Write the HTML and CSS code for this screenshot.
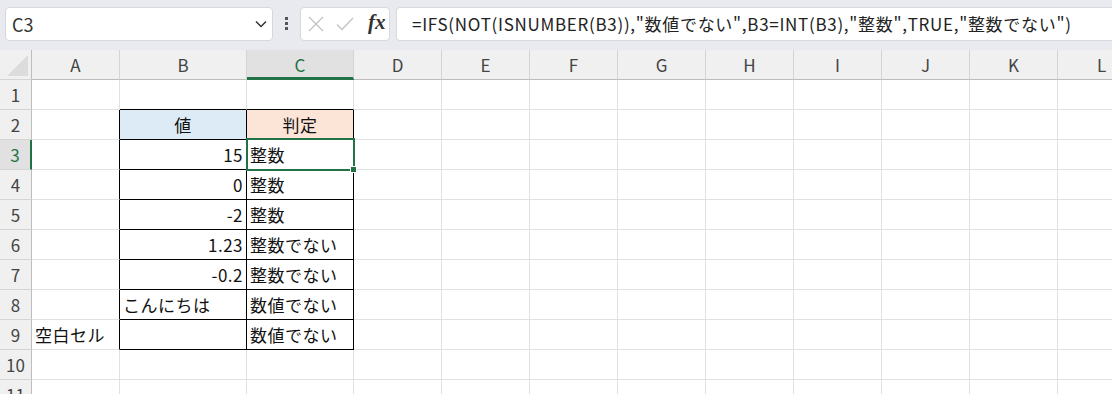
FILE: index.html
```html
<!DOCTYPE html>
<html lang="ja">
<head>
  <meta charset="UTF-8">
  <meta name="viewport" content="width=device-width, initial-scale=1.0">
  <title>IFS 整数判定</title>
  <link rel="stylesheet" href="styles.css">
</head>
<body>
  <div class="formula-bar">
    <div class="name-box">
      <span>C3</span>
      <svg class="chevron" width="12" height="8" viewBox="0 0 12 8"><path d="M1 1.5 L6 6.5 L11 1.5" fill="none" stroke="#333" stroke-width="1.5"/></svg>
    </div>
    <div class="dots"><i></i><i></i><i></i></div>
    <div class="fx-box">
      <svg width="16" height="16" viewBox="0 0 16 16"><path d="M1 1 L15 15 M15 1 L1 15" stroke="#c4c4c4" stroke-width="1.4"/></svg>
      <svg width="18" height="14" viewBox="0 0 18 14"><path d="M1 7.5 L6 12.5 L17 1" fill="none" stroke="#c4c4c4" stroke-width="1.4"/></svg>
      <span class="fx">fx</span>
    </div>
    <div class="formula">=IFS(NOT(ISNUMBER(B3)),"数値でない",B3=INT(B3),"整数",TRUE,"整数でない")</div>
  </div>

  <table class="sheet">
    <colgroup>
      <col class="w-row">
      <col class="w-a">
      <col class="w-b">
      <col class="w-c">
      <col><col><col><col><col><col><col><col><col>
    </colgroup>
    <tr class="col-heads">
      <th class="corner"><div class="tri"></div></th>
      <th>A</th><th>B</th><th class="active">C</th><th>D</th><th>E</th><th>F</th><th>G</th><th>H</th><th>I</th><th>J</th><th>K</th><th>L</th>
    </tr>
    <tr>
      <th>1</th><td></td><td class="top"></td><td class="top"></td><td></td><td></td><td></td><td></td><td></td><td></td><td></td><td></td><td></td>
    </tr>
    <tr>
      <th>2</th><td class="left"></td><td class="box head-b">値</td><td class="box head-c">判定</td><td></td><td></td><td></td><td></td><td></td><td></td><td></td><td></td><td></td>
    </tr>
    <tr>
      <th class="active">3</th><td class="left"></td><td class="box num">15</td><td class="box selected">整数<div class="sel"><div class="handle"></div></div></td><td></td><td></td><td></td><td></td><td></td><td></td><td></td><td></td><td></td>
    </tr>
    <tr>
      <th>4</th><td class="left"></td><td class="box num">0</td><td class="box">整数</td><td></td><td></td><td></td><td></td><td></td><td></td><td></td><td></td><td></td>
    </tr>
    <tr>
      <th>5</th><td class="left"></td><td class="box num">-2</td><td class="box">整数</td><td></td><td></td><td></td><td></td><td></td><td></td><td></td><td></td><td></td>
    </tr>
    <tr>
      <th>6</th><td class="left"></td><td class="box num">1.23</td><td class="box">整数でない</td><td></td><td></td><td></td><td></td><td></td><td></td><td></td><td></td><td></td>
    </tr>
    <tr>
      <th>7</th><td class="left"></td><td class="box num">-0.2</td><td class="box">整数でない</td><td></td><td></td><td></td><td></td><td></td><td></td><td></td><td></td><td></td>
    </tr>
    <tr>
      <th>8</th><td class="left"></td><td class="box">こんにちは</td><td class="box">数値でない</td><td></td><td></td><td></td><td></td><td></td><td></td><td></td><td></td><td></td>
    </tr>
    <tr>
      <th>9</th><td class="left">空白セル</td><td class="box"></td><td class="box">数値でない</td><td></td><td></td><td></td><td></td><td></td><td></td><td></td><td></td><td></td>
    </tr>
    <tr>
      <th>10</th><td></td><td></td><td></td><td></td><td></td><td></td><td></td><td></td><td></td><td></td><td></td><td></td>
    </tr>
    <tr>
      <th>11</th><td></td><td></td><td></td><td></td><td></td><td></td><td></td><td></td><td></td><td></td><td></td><td></td>
    </tr>
  </table>
</body>
</html>
```

FILE: styles.css
```css
body {
  margin: 0;
  width: 1112px;
  height: 394px;
  overflow: hidden;
  background-color: #fff;
  font-family: "Noto Sans CJK JP", "Noto Sans", sans-serif;
  color: #111;
}
.formula-bar {
  display: flex;
  align-items: flex-start;
  height: 50px;
  padding: 7px 0 0 5px;
  box-sizing: border-box;
  background-color: #e8eaef;
}
.name-box {
  display: flex;
  align-items: center;
  justify-content: space-between;
  width: 268px;
  height: 34px;
  padding: 0 5px 0 6px;
  box-sizing: border-box;
  background-color: #fff;
  border: 1px solid #d6d8dd;
  border-radius: 4px;
  font-size: 18px;
  color: #333;
}
.name-box span {
  margin-top: -1px;
}
.dots {
  display: flex;
  flex-direction: column;
  gap: 2px;
  width: 27px;
  align-items: center;
  padding-top: 10px;
}
.dots i {
  width: 3px;
  height: 3px;
  background-color: #555;
}
.fx-box {
  display: flex;
  align-items: center;
  width: 90px;
  height: 34px;
  padding-left: 7px;
  box-sizing: border-box;
  background-color: #fff;
  border: 1px solid #d6d8dd;
  border-radius: 4px;
}
.fx-box svg {
  margin-right: 12px;
}
.fx-box svg + svg {
  margin-right: 14px;
}
.fx {
  font-family: "Liberation Serif", serif;
  font-style: italic;
  font-weight: bold;
  font-size: 21px;
  color: #333;
  margin-top: -3px;
}
.formula {
  flex: 1;
  height: 34px;
  margin-left: 6px;
  padding-left: 15px;
  box-sizing: border-box;
  background-color: #fff;
  border: 1px solid #d6d8dd;
  border-right: none;
  border-radius: 4px 0 0 4px;
  font-size: 17px;
  line-height: 32px;
  color: #222;
  white-space: nowrap;
  letter-spacing: 0.7px;
}
.sheet {
  table-layout: fixed;
  width: 1145px;
  border-collapse: separate;
  border-spacing: 0;
}
.sheet col {
  width: 88px;
}
.sheet col.w-row {
  width: 32px;
}
.sheet col.w-b {
  width: 127px;
}
.sheet col.w-c {
  width: 107px;
}
.sheet th,
.sheet td {
  box-sizing: border-box;
  height: 30px;
  padding: 0 3px;
  border-right: 1px solid #e1e1e1;
  border-bottom: 1px solid #e1e1e1;
  font-size: 17px;
  font-weight: normal;
  white-space: nowrap;
  overflow: visible;
  letter-spacing: 0.5px;
}
.sheet th {
  background-color: #f0f0f0;
  color: #444;
  text-align: center;
  padding: 0;
  border-right-color: #d4d4d4;
  letter-spacing: 0;
}
.sheet tr th:first-child {
  border-right-color: #bdbdbd;
  border-bottom-color: #d4d4d4;
}
.col-heads th {
  border-bottom-color: #bdbdbd;
  font-size: 17px;
}
.col-heads th.corner {
  position: relative;
  border-bottom-color: #bdbdbd;
}
.tri {
  position: absolute;
  right: 3px;
  bottom: 3px;
  width: 0;
  height: 0;
  border-left: 21px solid transparent;
  border-bottom: 21px solid #dcdcdc;
}
.col-heads th.active {
  background-color: #e1e1e1;
  color: #217346;
  border-bottom: 3px solid #217346;
  padding-top: 2px;
}
.sheet tr th.active:first-child {
  background-color: #e1e1e1;
  color: #217346;
  border-right: 2px solid #217346;
}
.sheet td.top {
  border-bottom-color: #000;
}
.sheet td.left {
  border-right-color: #000;
}
.sheet td.box {
  border-right-color: #000;
  border-bottom-color: #000;
}
.sheet td.num {
  text-align: right;
}
.head-b {
  background-color: #ddebf7;
  text-align: center;
}
.head-c {
  background-color: #fce4d6;
  text-align: center;
}
.selected {
  position: relative;
}
.sel {
  position: absolute;
  top: -2px;
  left: -1px;
  width: 109px;
  height: 33px;
  box-sizing: border-box;
  border: 2px solid #217346;
}
.handle {
  position: absolute;
  right: -4px;
  bottom: -4px;
  width: 5px;
  height: 5px;
  background-color: #217346;
  border: 1px solid #fff;
}
```
